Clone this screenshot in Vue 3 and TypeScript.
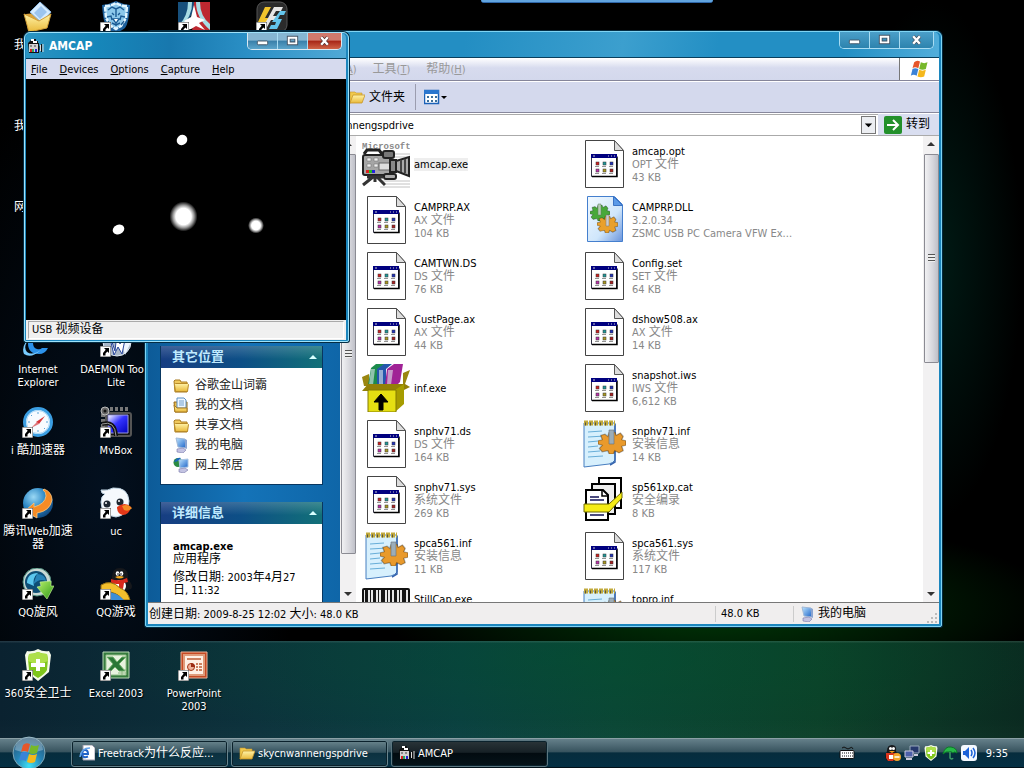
<script setup lang="ts">
import { h } from 'vue'

interface Shortcut { icon: string; label: string; col: number; row: number; arrow?: boolean }
interface FileItem { name: string; icon: string; kind?: string; size?: string; selected?: boolean }

// Chinese runs are set one pixel larger than the Latin text around them.
const Txt = (props: { t: string }) =>
  h('span', props.t.split(/([\u4e00-\u9fff]+)/).filter(Boolean).map(run =>
    /[\u4e00-\u9fff]/.test(run) ? h('span', { class: 'zh' }, run) : run))
Txt.props = ['t']

const shortcuts: Shortcut[] = [
  { icon: 'mydocs', label: '我的文档', col: 1, row: 1 },
  { icon: 'lion', label: '', col: 2, row: 1, arrow: true },
  { icon: 'star', label: '', col: 3, row: 1, arrow: true },
  { icon: 'lfs', label: '', col: 4, row: 1, arrow: true },
  { icon: 'pc', label: '我的电脑', col: 1, row: 2 },
  { icon: 'network', label: '网上邻居', col: 1, row: 3 },
  { icon: 'ie', label: 'Internet Explorer', col: 1, row: 5 },
  { icon: 'daemon', label: 'DAEMON Tools Lite', col: 2, row: 5, arrow: true },
  { icon: 'compass', label: 'i 酷加速器', col: 1, row: 6, arrow: true },
  { icon: 'mvbox', label: 'MvBox', col: 2, row: 6, arrow: true },
  { icon: 'webacc', label: '腾讯Web加速器', col: 1, row: 7, arrow: true },
  { icon: 'uc', label: 'uc', col: 2, row: 7, arrow: true },
  { icon: 'whirl', label: 'QQ旋风', col: 1, row: 8, arrow: true },
  { icon: 'qqgame', label: 'QQ游戏', col: 2, row: 8, arrow: true },
  { icon: 'shield', label: '360安全卫士', col: 1, row: 9, arrow: true },
  { icon: 'excel', label: 'Excel 2003', col: 2, row: 9, arrow: true },
  { icon: 'ppt', label: 'PowerPoint 2003', col: 3, row: 9, arrow: true },
]

const files: FileItem[] = [
  { name: 'amcap.exe', icon: 'camera', selected: true },
  { name: 'amcap.opt', icon: 'doc', kind: 'OPT 文件', size: '43 KB' },
  { name: 'CAMPRP.AX', icon: 'doc', kind: 'AX 文件', size: '104 KB' },
  { name: 'CAMPRP.DLL', icon: 'dll', kind: '3.2.0.34', size: 'ZSMC USB PC Camera VFW Ex...' },
  { name: 'CAMTWN.DS', icon: 'doc', kind: 'DS 文件', size: '76 KB' },
  { name: 'Config.set', icon: 'doc', kind: 'SET 文件', size: '64 KB' },
  { name: 'CustPage.ax', icon: 'doc', kind: 'AX 文件', size: '44 KB' },
  { name: 'dshow508.ax', icon: 'doc', kind: 'AX 文件', size: '14 KB' },
  { name: 'inf.exe', icon: 'rar' },
  { name: 'snapshot.iws', icon: 'doc', kind: 'IWS 文件', size: '6,612 KB' },
  { name: 'snphv71.ds', icon: 'doc', kind: 'DS 文件', size: '164 KB' },
  { name: 'snphv71.inf', icon: 'inf', kind: '安装信息', size: '14 KB' },
  { name: 'snphv71.sys', icon: 'doc', kind: '系统文件', size: '269 KB' },
  { name: 'sp561xp.cat', icon: 'cat', kind: '安全编录', size: '8 KB' },
  { name: 'spca561.inf', icon: 'inf', kind: '安装信息', size: '11 KB' },
  { name: 'spca561.sys', icon: 'doc', kind: '系统文件', size: '117 KB' },
  { name: 'StillCap.exe', icon: 'still', kind: ' ', size: '' },
  { name: 'topro.inf', icon: 'inf', kind: ' ', size: '' },
]

const places = [
  { icon: 'folder', label: '谷歌金山词霸' },
  { icon: 'docfolder', label: '我的文档' },
  { icon: 'folder', label: '共享文档' },
  { icon: 'pc', label: '我的电脑' },
  { icon: 'network', label: '网上邻居' },
]
const captureMenus = ['File', 'Devices', 'Options', 'Capture', 'Help']
const explorerMenus = [['收藏', 'A'], ['工具', 'T'], ['帮助', 'H']]
const tasks = [
  { icon: 'iepage', label: 'Freetrack为什么反应...', active: false },
  { icon: 'yfolder', label: 'skycnwannengspdrive', active: false },
  { icon: 'cam16', label: 'AMCAP', active: true },
]
const dots = [[16, 22, '#c22'], [23, 22, '#299'], [30, 22, '#23b'], [16, 29, '#b3a'], [23, 29, '#a92'], [30, 29, '#a22']]
const bars = [[3, 3], [8, 1], [11, 3], [16, 1], [19, 4], [25, 1], [28, 2], [32, 3], [37, 1], [40, 4]]
</script>

<template>
  <div class="screen">
    <svg class="defs" aria-hidden="true">
      <defs>
        <linearGradient id="gFold" x1="0" y1="0" x2="0" y2="1"><stop offset="0" stop-color="#fff3a8" /><stop offset="1" stop-color="#e9b93a" /></linearGradient>
        <linearGradient id="gBlue" x1="0" y1="0" x2="1" y2="1"><stop offset="0" stop-color="#bfe6ff" /><stop offset="1" stop-color="#1c63c8" /></linearGradient>
        <radialGradient id="gOrb" cx=".5" cy=".9" r=".85"><stop offset="0" stop-color="#3fe0f4" /><stop offset=".5" stop-color="#2583b4" /><stop offset="1" stop-color="#2a5878" /></radialGradient>
        <radialGradient id="gBall" cx=".35" cy=".3" r=".8"><stop offset="0" stop-color="#9ad8f4" /><stop offset=".5" stop-color="#2a86c4" /><stop offset="1" stop-color="#0d3e72" /></radialGradient>
        <linearGradient id="gGreen" x1="0" y1="0" x2="1" y2="1"><stop offset="0" stop-color="#b8f06a" /><stop offset="1" stop-color="#2f9a18" /></linearGradient>
        <linearGradient id="gBox" x1="0" y1="0" x2="1" y2="1"><stop offset="0" stop-color="#fff" /><stop offset=".45" stop-color="#33f" /><stop offset="1" stop-color="#00b" /></linearGradient>
        <radialGradient id="gGlow"><stop offset="0" stop-color="#fff" /><stop offset=".55" stop-color="#fff" /><stop offset=".75" stop-color="#999" /><stop offset="1" stop-color="#000" /></radialGradient>
        <linearGradient id="gPage" x1="0" y1="0" x2="1" y2="1"><stop offset="0" stop-color="#f2f9ff" /><stop offset=".6" stop-color="#cfe6fb" /><stop offset="1" stop-color="#6a94dc" /></linearGradient>
      </defs>
      <symbol id="i-arrow" viewBox="0 0 11 11"><path d="M0 0h11v11H0z" fill="#fff" stroke="#444" stroke-width="1" /><path d="M4 2h5v5L7.400 5.400 5.500 7.500V9.500H3V7L5.700 3.800z" fill="#000" /></symbol>
      <symbol id="i-flag" viewBox="0 0 24 24">
        <path d="M5 4q3-3 7-1l-2 8q-4-2-7 0z" fill="#e6562a" /><path d="M13 4q4 2 8 0l-2 8q-4 2-8 0z" fill="#76b82a" />
        <path d="M3 12q3-2 7 0l-2 8q-4-2-7 0z" fill="#3b83d8" /><path d="M11 13q4 2 8 0l-2 8q-4 2-8 0z" fill="#f5b81c" />
      </symbol>
      <symbol id="i-folder" viewBox="0 0 16 16"><path d="M1 4l1-1h5l1 2h6v10H2z" fill="#f0c95c" stroke="#a97b20" /><path d="M1.500 7.500l1-1h12l1 1-1 7h-12z" fill="url(#gFold)" stroke="#b98b28" /></symbol>
      <symbol id="i-yfolder" viewBox="0 0 16 16"><path d="M1 3h5l1 1h6v3H4L2 14H1z" fill="#f0c94c" stroke="#c7962a" stroke-width=".6" /><path d="M4 6h12l-3 8H1z" fill="url(#gFold)" stroke="#c7962a" stroke-width=".8" /></symbol>
      <symbol id="i-docfolder" viewBox="0 0 16 16"><path d="M1 5h13v10H2z" fill="#e9bb4a" stroke="#94691a" /><path d="M4 1h7l2 2v8H4z" fill="#eef7ff" stroke="#5b8fc4" /><path d="M6 4h5M6 6h5M6 8h5" stroke="#6f9fd0" /><path d="M1 8l3 3h10v4H2z" fill="url(#gFold)" stroke="#a97b20" /></symbol>
      <symbol id="i-pc" viewBox="0 0 16 16"><path d="M3 1l9 1 1 9-8-1z" fill="url(#gBlue)" stroke="#9fb8d8" /><path d="M12 2l2 1v9l-2-1z" fill="#8aa4d0" /><path d="M4 12l6-1 3 2-3 3-6-1z" fill="#c3c3e2" stroke="#7777aa" stroke-width=".6" /></symbol>
      <symbol id="i-network" viewBox="0 0 16 16"><circle cx="5" cy="5.500" r="4.500" fill="#2b8b42" /><path d="M1 5q3-5 7-4-3 4-7 4" fill="#1b67be" /><path d="M6 3l9-1v8l-8 1z" fill="url(#gBlue)" stroke="#a9c5e4" /><path d="M6 12l6-1 3 2-4 3-5-1z" fill="#c3c3e2" stroke="#7777aa" stroke-width=".6" /></symbol>
      <symbol id="i-cam16" viewBox="0 0 16 16"><path d="M0 5l3-3V1h5v2h2v2h1v10H1z" fill="#111" /><path d="M1 6h9v8H1z" fill="#d4d0d0" /><path d="M3 1h3v2H3zM5 3h4v2H5z" fill="#fff" /><path d="M2 7h2v2H2zM6 7h2v2H6z" fill="#888" /><path d="M2 11h2v3H2z" fill="#d22" /><path d="M4 11h2v3H4z" fill="#2a6" /><path d="M7 11h2v3H7z" fill="#22c" /><path d="M12.500 7v6M15 6v8" stroke="#ddd" /><path d="M13.500 6v8M11 8v4" stroke="#111" /></symbol>
      <symbol id="i-iepage" viewBox="0 0 16 16"><path d="M4 0h9l3 3v12H4z" fill="#fff" stroke="#99a" /><path d="M8.500 9H3q0-4 3-4t3 4zM3 9.500q1 4 6 2" fill="none" stroke="#2264c8" stroke-width="2" /><path d="M1 12Q2 3 11 3" fill="none" stroke="#65a4e8" stroke-width="1.500" /></symbol>
      <symbol id="i-mydocs" viewBox="0 0 32 32"><path d="M4 13l9-1 3-3 9 4v12L6 30z" fill="#d9a23a" /><path d="M8 11L18 1l11 10-9 11z" fill="#d6ecff" stroke="#89b5df" /><path d="M12 12l7-7 6 6-7 7z" fill="#9cc5ef" /><path d="M2 13l15 7 12-7-4 14-18 4z" fill="url(#gFold)" stroke="#d3a038" /></symbol>
      <symbol id="i-lion" viewBox="0 0 32 32"><path d="M2 4q8-1 14-4 6 3 14 4-1 18-5 23-5 4-9 4-5 0-9-4Q3 21 2 4z" fill="#1d609c" /><path d="M5 5q6 0 11-3 5 3 11 3l-1 12-5 8-5 3-5-3-5-8z" fill="#8cc8ea" stroke="#e2f6ff" stroke-width="2.500" stroke-dasharray="5 1" /><path d="M8 9l4-3 4 2 4-2 4 3M7 16l4-1 1 4M25 16l-4-1-1 4M16 8v8M12 12l2 2M20 12l-2 2M13 18h6l-3 4zM16 22v3M12 22l4 2 4-2M8 20l3 4M24 20l-3 4" fill="none" stroke="#1b5b93" stroke-width="1.400" /><path d="M14 18h4l-2 3z" fill="#fff" /></symbol>
      <symbol id="i-star" viewBox="0 0 32 32"><path d="M0 1h20L4 32H0z" fill="#17507c" /><path d="M16 1h16v31H14z" fill="#bd2830" /><path d="M10 1h4Q15 15 1 29v-5Q10 15 10 1zM18 1h4q0 14 10 22v6Q18 17 18 1z" fill="#a8dce4" /><path d="M16 4l3 12 8 3-6 3 6 7-9-4-5 3-9 2 6-6-4-4 7-4z" fill="#fff" /></symbol>
      <symbol id="i-lfs" viewBox="0 0 32 32"><rect x="1" y="1" width="30" height="30" rx="7" fill="#2b2b2b" stroke="#555" /><path d="M9 6h6L9 17h5l-2 4H2z" fill="#f2c42c" /><path d="M18 6h9l-2 4h-5l-3 5h5l-2 4h-5l-5 9h-4z" fill="#e6e6e6" /><path d="M24 10h6l-2 4h-4l-2 4h4l-5 10h-8l2-4h4l1-3h-4z" fill="#64c5ec" /></symbol>
      <symbol id="i-ie" viewBox="0 0 32 32"><path d="M9 18h18Q28 6 17 6T6 18q0 11 11 11 6 0 9-6h-6q-2 2-5 1-4-1-4-6z" fill="#2c92ea" /><path d="M11 14q2-4 6-4t5 4z" fill="#041020" /><path d="M2 29Q-2 20 12 8 27-2 29 5q-11-3-20 7-9 9-4 15 5 4 14-2-10 9-17 4z" fill="#78ccff" /></symbol>
      <symbol id="i-daemon" viewBox="0 0 32 32"><circle cx="17" cy="17" r="14" fill="#a9b7c8" stroke="#dde8f2" /><path d="M18 3l7 27 6-13z" fill="#edf5ff" /><path d="M8 5l7 21 2-18 3 11 7-14-5 24-4-7-4 8z" fill="#fff" stroke="#27459b" /></symbol>
      <symbol id="i-compass" viewBox="0 0 32 32"><circle cx="16" cy="16" r="13.500" fill="#f7fbff" stroke="#3b9ee2" stroke-width="3" /><circle cx="16" cy="16" r="11.500" fill="none" stroke="#a7d8f8" /><path d="M16 6v2M16 24v2M6 16h2M24 16h2M9 9l1 1M23 23l-1-1M9 23l1-1" stroke="#5aa3d8" /><path d="M23 10l-6 8-3-2z" fill="#d8363a" /><path d="M9 22l6-6 2 2z" fill="#df777b" /></symbol>
      <symbol id="i-mvbox" viewBox="0 0 32 32"><rect x="6" y="7" width="25" height="23" rx="2" fill="#141414" stroke="#555" stroke-width="2" /><path d="M8 9h20v18H8z" fill="url(#gBox)" stroke="#99d" /><path d="M10 3h18M3 8v20" stroke="#777" stroke-width="4" stroke-dasharray="3 2" /><circle cx="5" cy="5" r="4" fill="#666" stroke="#bbb" /><circle cx="5" cy="5" r="1.500" fill="#111" /><path d="M2 18q13-4 14 12" fill="none" stroke="#111" stroke-width="4" /><path d="M2 18q13-4 14 12" fill="none" stroke="#999" /></symbol>
      <symbol id="i-webacc" viewBox="0 0 32 32"><circle cx="16" cy="16" r="15" fill="url(#gBall)" /><path d="M22 2q8 3 8 11-2 11-15 13v5L3 24l9-8v4q11-3 12-11 0-4-3-6z" fill="#f58b25" stroke="#ffc67a" stroke-width=".8" /></symbol>
      <symbol id="i-uc" viewBox="0 0 32 32"><path d="M1 3q7 1 12-2 15-1 16 13 0 14-13 16Q1 28 1 15q0-6 4-8-4 0-4-4z" fill="#f5f9fd" stroke="#bfd3e2" /><circle cx="7" cy="17" r="3.500" fill="#1c2630" /><circle cx="20" cy="15" r="3.500" fill="#1c2630" /><circle cx="6" cy="16" r="1" fill="#fff" /><circle cx="19" cy="14" r="1" fill="#fff" /><path d="M17 20q8-6 14 0-2 8-8 8-6-1-6-8z" fill="#e33718" /><path d="M22 19q6-3 10 2-3 4-8 2z" fill="#f58b25" /></symbol>
      <symbol id="i-whirl" viewBox="0 0 32 32"><circle cx="15" cy="14" r="14" fill="#c9d9d5" stroke="#4c8b7b" /><circle cx="14" cy="14" r="11" fill="#0f4e75" /><path d="M5 15Q5 5 16 5q-6 5-4 13z" fill="#5bc7ee" /><path d="M15 6q8 0 9 7-7-3-13 4z" fill="#2784b8" /><path d="M18 14l11-1v5h3l-7 13-10-12 4-1z" fill="url(#gGreen)" stroke="#cbf59b" stroke-width=".6" /></symbol>
      <symbol id="i-qqgame" viewBox="0 0 32 32"><path d="M12 12q-1-12 8-12t8 11q6 7 3 10-9 4-19-1z" fill="#16181c" /><ellipse cx="20" cy="18" rx="6" ry="6" fill="#fff" /><ellipse cx="17.500" cy="5.500" rx="1.800" ry="2.200" fill="#fff" /><ellipse cx="21.500" cy="5.500" rx="1.800" ry="2.200" fill="#fff" /><circle cx="18" cy="6" r=".8" /><circle cx="21" cy="6" r=".8" /><path d="M15 9q5-2 9 0-4 3-9 0" fill="#f5a81c" /><path d="M11 11q8 3 16-1l1 4-4 1-1 6-4-1v-4q-6 0-8-2z" fill="#d8281c" /><path d="M1 17q10-6 19 3 8 3 10 12h-7Q18 24 1 22z" fill="#f3bf2c" stroke="#946d10" /><path d="M2 23q16 1 22 9H2z" fill="#3b8ed5" /></symbol>
      <symbol id="i-shield" viewBox="0 0 32 32"><path d="M5 2q6 1 11-2 5 3 11 2l2 4-2 17-11 9L5 23 3 6z" fill="#f5fae9" /><path d="M7 5q5 0 9-2 4 2 9 2l1 5-1 11q-2 4-9 8-7-4-9-8L6 10z" fill="#7fc61c" /><path d="M7 5q5 0 9-2 4 2 9 2l1 7q-10 5-20 0z" fill="#aee04a" /><path d="M14 10h4v4h5v4h-5v4h-4v-4H9v-4h5z" fill="#fff" /></symbol>
      <symbol id="i-excel" viewBox="0 0 32 32"><path d="M3 3h26v26H3z" fill="#367c3e" stroke="#b9d8b5" /><path d="M6 6h20v20H6z" fill="#e8f2df" stroke="#93bd88" /><path d="M18 21h8M18 24h8M22 19v7" stroke="#8eb783" /><path d="M7 8h6l4 5 5-5h4l-7 7 6 7h-6l-4-4-4 4H7l6-7z" fill="#2a7736" stroke="#72b16c" /></symbol>
      <symbol id="i-ppt" viewBox="0 0 32 32"><path d="M3 3h26v26H3z" fill="#c64a24" stroke="#eab198" /><path d="M6 6h20v20H6z" fill="#fff0e5" stroke="#e09b7a" stroke-width="2" /><path d="M9 10h14M18 15h2M21 15h3M18 18h2M21 18h3M18 21h2M21 21h3" stroke="#bd5b35" stroke-width="1.500" /><circle cx="13" cy="18" r="3.500" fill="#eeb19a" stroke="#a53616" /><path d="M13 14v4h4q0-4-4-4z" fill="#9c2b12" /></symbol>
      <symbol id="i-gear" viewBox="0 0 20 20" preserveAspectRatio="none"><path d="M8 0h4l1 3 3-2 2 3-1 3 3 1v4l-3 1 1 4-3 2-3-2-1 3H8l-1-3-4 1-2-3 2-3-3-1V8l3-1-1-4 3-1 2 2z" stroke="#00000050" /></symbol>
      <symbol id="i-doc" viewBox="0 0 48 48"><path d="M5.500 .5h29l9 10v37h-38z" fill="#fff" stroke="#444" /><path d="M34.500 .5v10h9z" fill="#ddd" stroke="#555" /><path d="M11.500 14.500h25v22h-25z" fill="#fff" stroke="#334" /><path d="M12 36.500h25v-20" fill="none" stroke="#000" stroke-width="1.500" /><path d="M11 14h26v4H11z" fill="#00007f" /><path d="M28 16h1M31 16h1M34 16h1M13 16h2" stroke="#ccc" />
        <g v-for="(d, i) in dots" :key="i"><rect :x="d[0]" :y="d[1]" width="3" height="3" :fill="String(d[2])" stroke="#333" stroke-width=".5" /><path :d="`M${Number(d[0]) - 1} ${Number(d[1]) + 4.5}h4`" stroke="#777" stroke-width=".8" /></g>
      </symbol>
      <symbol id="i-dll" viewBox="0 0 48 48"><path d="M7.500 .5h27l8 8v37h-35z" fill="url(#gPage)" stroke="#447fce" /><path d="M33.500 .5v9h9z" fill="#5a9ae8" stroke="#3b73c4" /><use href="#i-gear" x="10" y="9" width="20" height="16" fill="#48a83a" /><use href="#i-gear" x="17" y="20" width="21" height="17" fill="#e9a02c" /><path d="M18 8h3v11h-3z" fill="#b7cbb7" stroke="#5d7d5d" stroke-width=".5" /><path d="M26 19h3v11h-3z" fill="#ccc" stroke="#777" stroke-width=".5" /></symbol>
      <symbol id="i-inf" viewBox="0 0 48 48"><path d="M4 3h31v37q-2 3-6 4L4 47z" fill="#d7f0fd" stroke="#477ec0" /><path d="M35 4v38l-5 3" fill="none" stroke="#3564ae" stroke-width="1.500" /><path d="M8 12l14-1M8 17l17-1M8 22l10-1M8 27l10-1M8 32l12-1M8 37l15-1" stroke="#67aed8" /><path d="M4 3h31" stroke="#c2aa3c" stroke-width="5" stroke-dasharray="4 1" /><path d="M5 4h30" stroke="#554" stroke-width="3" stroke-dasharray="1 4" /><use href="#i-gear" x="18" y="12" width="28" height="22" fill="#e99a2c" /><path d="M29 10h5v14h-5z" fill="#9cadb8" stroke="#65717a" stroke-width=".6" /></symbol>
      <symbol id="i-cat" viewBox="0 0 48 48"><path d="M19 2h22v30H19z" fill="#fff" stroke="#000" stroke-width="2" /><path d="M12 8h23v30H12z" fill="#eee" stroke="#000" stroke-width="2" /><path d="M6 14h17l5 5v25H6z" fill="#fff" stroke="#000" stroke-width="2" /><path d="M22 14v6h6" fill="none" stroke="#000" stroke-width="1.500" /><path d="M10 21h9M10 24h14M10 39h14" stroke="#115" stroke-width="1.500" /><path d="M4 28h25l13-12v6L29 36H4z" fill="#f5ec16" stroke="#6d6800" /></symbol>
      <symbol id="i-rar" viewBox="0 0 48 48"><path d="M0 13l7-3v12H2zM41 22V9l7-3-5 14z" fill="#9a8610" /><path d="M6 21L9 4l5-4h9l-7 5v16z" fill="#1b8b4c" /><path d="M15 21V5l7-5h8l-6 5v16z" fill="#2456ac" /><path d="M23 21l2-16 7-5h9l-3 18-3 3z" fill="#a02296" /><path d="M9 5h4l-2 16H7zM17 6h4v15h-4zM26 6h5l-2 15h-4z" fill="#dfe9ec" opacity=".6" /><path d="M0 27l6-7h37l5 3-8 4z" fill="#938008" /><path d="M33 26l9-6v20l-9 8z" fill="#a69c00" /><path d="M6 26h28v22H6z" fill="#e5df12" stroke="#837a00" /><path d="M19 30l7 8h-5v8h-4v-8h-5z" stroke="#000" /></symbol>
      <symbol id="i-still" viewBox="0 0 48 48"><rect width="48" height="48" rx="2" fill="#111" /><path d="M2 2h44v46H2z" fill="#e6e6e6" /><rect v-for="(b, i) in bars" :key="i" :x="b[0]" y="2" :width="b[1]" height="46" fill="#151515" /></symbol>
      <symbol id="i-camera" viewBox="0 0 48 48"><path d="M24 14h24M26 17h22M20 41h28M24 44h24M18 47h30" stroke="#c2c2c2" /><text x="0" y="9" font-family="Liberation Mono, monospace" font-weight="bold" font-size="9" fill="#8a8a8a">Microsoft</text><path d="M2 14l3-4h12l3 4" fill="none" stroke="#222" stroke-width="3" /><rect x="1" y="15" width="27" height="20" rx="2" fill="#a5a5a5" stroke="#222" stroke-width="2" /><path d="M5 18h4v3H5zM12 18h4v3h-4zM5 24h4v3H5zM12 24h4v3h-4z" fill="#eee" stroke="#777" stroke-width=".6" /><path d="M4 30h3v3H4z" fill="#d22" /><path d="M7 30h3v3H7z" fill="#2b2" /><path d="M10 30h3v3h-3z" fill="#22d" /><rect x="21" y="11" width="11" height="7" rx="2" fill="#777" stroke="#222" stroke-width="2" /><rect x="17" y="23" width="12" height="7" fill="#ddd" stroke="#666" /><rect x="28" y="20" width="6" height="12" fill="#888" stroke="#222" stroke-width="2" /><path d="M34 21l13-4v19l-13-5z" fill="#aaa" stroke="#222" stroke-width="2" /><path d="M39 20v12M43 19v14" stroke="#444" stroke-width="2" /><rect x="22" y="34" width="12" height="5" rx="2" fill="#aaa" stroke="#222" stroke-width="2" /><path d="M5 37h16M11 37l-10 8M15 37l8 8M13 38v4" stroke="#333" stroke-width="3" /></symbol>
    </svg>

    <main class="desktop">
      <div class="peek"></div>
      <div class="shortcuts">
        <a v-for="s in shortcuts" :key="s.icon" href="#" class="shortcut" :class="{ wide: s.icon === 'daemon' }" :style="{ gridColumn: s.col, gridRow: s.row }" :aria-label="s.label || s.icon">
          <span class="pic">
            <svg><use :href="'#i-' + s.icon" /></svg>
            <svg v-if="s.arrow" class="link"><use href="#i-arrow" /></svg>
          </span>
          <Txt class="name" :class="{ latin: /^[\x20-\x7e]+$/.test(s.label) }" :t="s.label" />
        </a>
      </div>

      <section class="window explorer" aria-label="skycnwannengspdrive">
        <header class="titlebar">
          <div class="controls">
            <button aria-label="最小化"><svg viewBox="0 0 30 17"><rect x="9.500" y="8.500" width="11" height="4" rx="1" fill="#fff" stroke="#456" /></svg></button>
            <button aria-label="最大化"><svg viewBox="0 0 30 17"><path d="M11 5h8v6h-8z" fill="none" stroke="#456" stroke-width="4" /><path d="M11 5h8v6h-8z" fill="none" stroke="#fff" stroke-width="2" /></svg></button>
            <button class="close" aria-label="关闭"><svg viewBox="0 0 30 17"><path d="M11.500 4.500l7 8m0-8l-7 8" stroke="#456" stroke-width="4" /><path d="M11.500 4.500l7 8m0-8l-7 8" stroke="#fff" stroke-width="2.500" /></svg></button>
          </div>
        </header>
        <div class="body">
          <div class="menurow">
            <nav class="menus"><button v-for="m in explorerMenus" :key="m[1]"><Txt :t="m[0]" />(<u>{{ m[1] }}</u>)</button></nav>
            <div class="brand"><svg><use href="#i-flag" /></svg></div>
          </div>
          <div class="toolbar">
            <button><svg><use href="#i-yfolder" /></svg><Txt t="文件夹" /></button>
            <span class="sep"></span>
            <button aria-label="查看"><svg class="view" viewBox="0 0 24 16"><path d="M.5 1.500h14v13H.5z" fill="#fff" stroke="#1b62b8" stroke-width="1.500" /><path d="M0 1h15v4H0z" fill="#2a76ce" /><path d="M3 8h2M7 8h2M11 8h2M3 12h2M7 12h2M11 12h2" stroke="#3c6f9b" stroke-width="2" /><path d="M17 7h6l-3 3z" /></svg></button>
          </div>
          <div class="address">
            <div class="combo">
              <input aria-label="地址" value="E:\skycnwannengspdrive">
              <button aria-label="展开"><svg viewBox="0 0 14 17"><path d="M3 7h8l-4 4z" /></svg></button>
            </div>
            <button class="go"><svg viewBox="0 0 18 18"><rect width="18" height="18" rx="2" fill="#23902b" /><path d="M3 9h11M9 4l5 5-5 5" fill="none" stroke="#fff" stroke-width="2" /></svg><Txt t="转到" /></button>
          </div>
          <div class="content">
            <aside class="side">
              <section class="panel places">
                <h2>其它位置<i></i></h2>
                <ul><li v-for="p in places" :key="p.label"><a href="#"><svg><use :href="'#i-' + p.icon" /></svg><Txt :t="p.label" /></a></li></ul>
              </section>
              <section class="panel">
                <h2>详细信息<i></i></h2>
                <div class="details"><b>amcap.exe</b><Txt t="应用程序" /><p><Txt t="修改日期: 2003年4月27日, 11:32" /></p></div>
              </section>
            </aside>
            <div class="scroll sidescroll"><i class="up"></i><div class="thumb"></div><i class="down"></i></div>
            <div class="files">
              <div v-for="f in files" :key="f.name" class="file">
                <svg><use :href="'#i-' + f.icon" /></svg>
                <div class="meta">
                  <span class="fname" :class="{ selected: f.selected }">{{ f.name }}</span>
                  <Txt v-if="f.kind" :t="f.kind" />
                  <span v-if="f.kind">{{ f.size }}</span>
                </div>
              </div>
            </div>
            <div class="scroll filescroll"><i class="up"></i><div class="thumb"></div><i class="down"></i></div>
          </div>
          <footer class="status">
            <Txt class="grow" t="创建日期: 2009-8-25 12:02 大小: 48.0 KB" />
            <span class="size">48.0 KB</span>
            <span class="zone"><svg><use href="#i-pc" /></svg><Txt t="我的电脑" /></span>
            <svg class="grip" viewBox="0 0 12 12"><path d="M8 1h2v2H8zM4 5h2v2H4zM8 5h2v2H8zM0 9h2v2H0zM4 9h2v2H4zM8 9h2v2H8z" fill="#bbb" /></svg>
          </footer>
        </div>
      </section>

      <section class="window capture" aria-label="AMCAP">
        <header class="titlebar">
          <svg class="logo"><use href="#i-cam16" /></svg>
          <h1>AMCAP</h1>
          <div class="controls">
            <button aria-label="最小化"><svg viewBox="0 0 30 17"><rect x="9.500" y="8.500" width="11" height="4" rx="1" fill="#fff" stroke="#456" /></svg></button>
            <button aria-label="最大化"><svg viewBox="0 0 30 17"><path d="M11 5h8v6h-8z" fill="none" stroke="#456" stroke-width="4" /><path d="M11 5h8v6h-8z" fill="none" stroke="#fff" stroke-width="2" /></svg></button>
            <button class="close" aria-label="关闭"><svg viewBox="0 0 30 17"><path d="M11.500 4.500l7 8m0-8l-7 8" stroke="#533" stroke-width="4" /><path d="M11.500 4.500l7 8m0-8l-7 8" stroke="#fff" stroke-width="2.500" /></svg></button>
          </div>
        </header>
        <div class="body">
          <nav class="menus"><button v-for="m in captureMenus" :key="m"><u>{{ m[0] }}</u>{{ m.slice(1) }}</button></nav>
          <svg class="video" viewBox="0 0 320 241">
            <rect width="320" height="241" />
            <ellipse cx="156" cy="61" rx="5.500" ry="5" fill="#fff" transform="rotate(-40 156 61)" />
            <ellipse cx="92.500" cy="150.500" rx="6" ry="4.800" fill="#fff" transform="rotate(-25 92.500 150.500)" />
            <ellipse cx="157.500" cy="137.500" rx="14" ry="15" fill="url(#gGlow)" />
            <ellipse cx="230" cy="146.500" rx="8" ry="8" fill="url(#gGlow)" />
          </svg>
          <footer><Txt t="USB 视频设备" /></footer>
        </div>
      </section>
    </main>

    <footer class="taskbar">
      <button class="start" aria-label="开始"><svg viewBox="0 0 34 34"><circle cx="17" cy="17" r="16" fill="url(#gOrb)" stroke="#7fa6b5" /><path d="M3 14a14 13 0 0 1 28 0q-14 5-28 0" fill="#fff" opacity=".3" /><use href="#i-flag" x="6" y="5" width="24" height="24" /></svg></button>
      <div class="tasks">
        <button v-for="t in tasks" :key="t.label" :class="{ active: t.active }"><svg><use :href="'#i-' + t.icon" /></svg><Txt :t="t.label" /></button>
      </div>
      <div class="tray">
        <svg class="kbd" viewBox="0 0 16 16"><path d="M3 3q2-2 4 0t4 0 3 1" fill="none" stroke="#111" /><rect x="1" y="5.500" width="14" height="8" rx="1" fill="#fff" stroke="#111" /><path d="M3 8h11M3 11h11" stroke="#111" stroke-width="1" stroke-dasharray="1 1" /></svg>
        <svg viewBox="0 0 16 16"><path d="M2 6q0-6 5-6t4 6l2 5-3 5H2L0 12z" fill="#17191c" /><circle cx="5.500" cy="3.500" r="1.500" fill="#fff" /><circle cx="8.500" cy="3.500" r="1.500" fill="#fff" /><path d="M4 6h6l-3 2z" fill="#f6a31c" /><path d="M1 8h10v4l-3 4H3l-2-3z" fill="#d8341c" /><path d="M4 10h4v4H4z" fill="#fff" /><circle cx="12" cy="12" r="4" fill="#f3a62a" /><path d="M9.500 12h5" stroke="#fff" stroke-width="1.500" /></svg>
        <svg viewBox="0 0 16 16"><path d="M6 1h9v7H6z" fill="#26386c" stroke="#9ab" /><path d="M1 6h8v6H1z" fill="#4c5fa8" stroke="#ccd" /><path d="M2 14h6M10 10h4" stroke="#ccd" stroke-width="2" /></svg>
        <svg class="sh"><use href="#i-shield" /></svg>
        <svg viewBox="0 0 16 16"><path d="M1 9Q3 1 9 2q6 1 6 6-3-2-4 0-2-2-4-1-3-1-6 2z" fill="#27b847" stroke="#0b7a28" /><path d="M8 7v6q2 2 3 0" fill="none" stroke="#3c9c66" stroke-width="1.500" /></svg>
        <svg viewBox="0 0 16 16"><rect width="16" height="16" rx="3" fill="#f4f9ff" /><path d="M2 6h2l4-4v12l-4-4H2z" fill="#1b62d8" /><path d="M10 5q2 3 0 6M12 3q4 5 0 10" fill="none" stroke="#1b62d8" stroke-width="1.500" /></svg>
        <time>9:35</time>
      </div>
    </footer>
  </div>
</template>

<style>
body { margin: 0; background: #000; }
.zh { font-size: 12px; }
</style>

<style scoped>
* { box-sizing: border-box; }
.screen {
  --latin: "DejaVu Sans Condensed", "Noto Sans CJK SC", sans-serif;
  display: flex; flex-direction: column; height: 100vh; overflow: hidden; position: relative;
  font: 11px/13px var(--latin); color: #000;
  background:
    linear-gradient(#ffffff18 1px, #0000 2px, #0000 60%, #ffffff0a) 0 100% / 100% 127px no-repeat,
    radial-gradient(ellipse 50% 90px at 58% calc(100% - 110px), #00552c66, #0000) 0 100% / 100% 127px no-repeat,
    linear-gradient(90deg, #0a2230, #0c323c 25%, #0a3f41 45%, #0b4536 60%, #0c4029 80%, #0a2a20) 0 100% / 100% 127px no-repeat,
    radial-gradient(ellipse 90px 260px at 91% 34%, #001c16, transparent),
    radial-gradient(ellipse 340px 90px at 70% 79%, #003a08, transparent),
    radial-gradient(ellipse 200px 420px at 10% 64%, #03101f, transparent),
    #000;
}
.defs { position: absolute; width: 0; height: 0; }
button { font: inherit; color: inherit; margin: 0; padding: 0; border: 0; background: none; }
a { color: inherit; text-decoration: none; }
svg { display: block; flex: none; width: 16px; height: 16px; }
h1, h2, p, ul { margin: 0; padding: 0; list-style: none; }
.desktop { flex: 1; min-height: 0; position: relative; }
.peek { position: absolute; top: 0; left: 47%; width: 232px; height: 3px; background: #61a4df; border-bottom: 1px solid #2e66a8; border-radius: 0 0 4px 4px; }

.shortcuts { display: grid; grid-template-columns: repeat(4, 78px); grid-auto-rows: 81px; margin-left: -1px; }
.shortcut { display: flex; flex-direction: column; align-items: center; gap: 6px; padding-top: 1px; color: #fff; text-align: center; }
.pic { position: relative; }
.pic svg { width: 32px; height: 32px; }
.pic .link { position: absolute; left: 0; bottom: 0; width: 11px; height: 11px; }
.name { width: 72px; text-shadow: 1px 1px 1px #000; word-break: break-all; }
.name.latin { word-break: normal; }
.wide .name { width: 76px; }

.window { position: absolute; display: flex; flex-direction: column; border: 1px solid #7fd4f3; border-radius: 6px 6px 2px 2px; background: #1c86bd; box-shadow: 0 0 0 1px #042c42; padding: 0 2px 2px; }
.body { display: flex; flex-direction: column; min-height: 0; flex: 1; border-top: 1px solid #093f5d; }
.titlebar { display: flex; align-items: center; height: 25px; flex: none; border-radius: 5px 5px 0 0; }
.controls { display: flex; align-self: flex-start; margin-left: auto; height: 17px; border: 1px solid #a9dcf2; border-top: 0; border-radius: 0 0 5px 5px; overflow: hidden; }
.controls button { width: 30px; border-right: 1px solid #a9dcf2; background: linear-gradient(#4b9fc9, #2c83ae); }
.controls .close { width: 33px; border-right: 0; }
.controls svg { width: 100%; height: 16px; }
.explorer { left: 145px; right: 82px; top: 31px; bottom: 111px; }
.explorer .titlebar { background: linear-gradient(100deg, #238ec3 40%, #3c9fce 60%, #238fc4 72%, #238fc4 88%, #52aedb); }
.explorer .controls { margin-right: 5px; }
.menurow { display: flex; height: 23px; flex: none; background: linear-gradient(#fff, #d7dbee 45%, #d3d8ec); border-bottom: 1px solid #85859a; }
.explorer .menus { display: flex; flex: 1; gap: 16px; padding-left: 170px; color: #999; align-items: center; }
.brand { width: 40px; background: #fff; border-left: 1px solid #777; display: grid; place-items: center; }
.brand svg { width: 20px; height: 20px; }
.toolbar { display: flex; align-items: center; height: 32px; flex: none; background: #d4d9ed; border-top: 1px solid #fff; border-bottom: 1px solid #88889d; padding-left: 201px; }
.toolbar button { display: flex; align-items: center; gap: 4px; }
.sep { width: 1px; height: 26px; background: #9b9daf; margin: 0 8px 0 10px; }
.toolbar .view { width: 24px; }
.address { display: flex; height: 23px; flex: none; background: #d9def0; border-bottom: 1px solid #aaa; border-top: 1px solid #fff; }
.combo { display: flex; flex: 1; align-items: center; background: #fff; border-top: 1px solid #aaa; margin-right: 6px; padding-right: 2px; }
.combo input { flex: 1; min-width: 0; border: 0; outline: 0; font: 11px/13px var(--latin); padding: 0 0 0 143px; background: none; }
.combo button { width: 15px; height: 18px; border: 1px solid #777; background: #eceef2; }
.combo svg { width: 13px; height: 16px; }
.go { display: flex; align-items: center; gap: 4px; padding-right: 9px; }
.go svg { width: 18px; height: 18px; }
.content { display: flex; flex: 1; min-height: 0; background: #fff; }
.side { width: 192px; flex: none; overflow: hidden; padding: 210px 17px 0 12px; background: linear-gradient(90deg, #0d5b98, #1473b8 50%, #0f66a8); display: flex; flex-direction: column; gap: 17px; }
.panel { flex: none; background: #fff; border: 1px solid #083660; border-top: 0; }
.panel h2 { height: 22px; display: flex; justify-content: space-between; align-items: center; padding: 0 5px 0 11px; font-size: 13px; line-height: 16px; color: #bfeaff; background: linear-gradient(#ffffff30, transparent 60%), linear-gradient(90deg, #173e82, #0d4f86 50%, #127078); }
.panel h2 i { border: 4px solid transparent; border-top: 0; border-bottom-color: #d8ffff; }
.places ul { padding: 7px 12px 9px; }
.places li a { display: flex; align-items: center; gap: 6px; height: 20px; color: #222; }
.details { padding: 16px 12px 12px; display: flex; flex-direction: column; }
.details p { padding-top: 5px; width: 130px; }
.scroll { width: 16px; flex: none; display: flex; flex-direction: column; align-items: center; background: #f2f1f2; padding: 6px 0; }
.scroll i { border: 4px solid transparent; flex: none; }
.scroll .up { border-top: 0; border-bottom-color: #333; }
.scroll .down { border-bottom: 0; border-top-color: #333; margin-top: auto; }
.thumb { width: 15px; margin-top: 8px; border: 1px solid #8b8b93; border-radius: 1px; background: linear-gradient(90deg, #f1f1f3, #d6d6dc 60%, #bfc0c8); display: grid; place-items: center; }
.thumb::after { content: ""; width: 7px; height: 8px; background: repeating-linear-gradient(#555 0 1px, #eee 1px 3px); }
.sidescroll .thumb { flex: 0 0 88%; }
.filescroll .thumb { flex: 0 0 46%; }
.files { flex: 1; min-width: 0; overflow: hidden; display: grid; grid-template-columns: 218px 218px; grid-auto-rows: 56px; padding-left: 6px; }
.file { display: flex; align-items: center; gap: 4px; }
.file svg { width: 48px; height: 48px; }
.meta { display: flex; flex-direction: column; align-items: flex-start; color: #888; white-space: nowrap; }
.meta > span { height: 13px; }
.meta .fname { color: #000; }
.meta .selected { background: #eee; }
.status { display: flex; align-items: center; height: 22px; flex: none; background: #f0eeee; border-top: 1px solid #777; }
.status > span { height: 16px; line-height: 16px; white-space: nowrap; }
.grow { flex: 1; padding-left: 1px; }
.status .size { width: 78px; border-left: 1px solid #ccc; padding-left: 5px; }
.status .zone { display: flex; align-items: center; width: 134px; border-left: 1px solid #ccc; padding-left: 5px; gap: 3px; }
.grip { width: 12px; height: 12px; align-self: flex-end; }

.capture { left: 24px; top: 32px; width: 325px; padding: 0 2px 1px 1px; border-color: #9fe2fa; }
.capture .titlebar { padding-left: 2px; background: linear-gradient(90deg, #2b94c2, #1688bb 20%, #1878ae 45%, #2b90c6 70%, #51a9d6); }
.capture h1 { font-size: 12px; line-height: 16px; color: #fff; margin-left: 5px; }
.capture .controls { margin-right: 4px; border-color: #dbe9f2; }
.capture .controls button { background: linear-gradient(#86b6d2 45%, #397fa9 50%, #5ca5cb); }
.capture .controls .close { background: linear-gradient(#d0796c 45%, #a72516 50%, #d06448); }
.capture .menus { display: flex; gap: 12px; height: 20px; padding-left: 5px; background: #d6daee; align-items: center; }
.video { width: 100%; height: auto; }
.capture footer { height: 20px; background: #f0f0f0; padding: 1px 2px; }
.capture footer > span { display: block; height: 18px; border: 1px solid #aaa; border-right-color: #fff; border-bottom-color: #fff; line-height: 15px; padding-left: 3px; }

.taskbar { position: relative; display: flex; align-items: center; height: 30px; flex: none; color: #fff; border-top: 1px solid #8ba0a6; border-bottom: 1px solid #001018; background: linear-gradient(#65808a, #38545f 45%, #062c3d 50%, #043044); }
.start { width: 34px; margin: 0 25px 0 12px; }
.start svg { width: 34px; height: 34px; margin: -3px 0; }
.tasks { display: flex; gap: 3px; flex: 1; min-width: 0; }
.tasks button { display: flex; align-items: center; gap: 3px; flex: 0 1 157px; min-width: 0; height: 27px; padding: 0 7px; border: 1px solid #67848d; border-radius: 3px; background: linear-gradient(#6a858d, #34525e 45%, #0b3140 50%, #123a4a); box-shadow: inset 0 0 0 1px #0b222c; white-space: nowrap; overflow: hidden; }
.tasks .active { background: linear-gradient(#2a3539, #172126 45%, #020b10 50%, #06141a); border-color: #5b7680; }
.tray { display: flex; align-items: center; gap: 3px; padding-right: 16px; }
.kbd { margin-right: 27px; }
.tray time { margin-left: 6px; }
</style>
